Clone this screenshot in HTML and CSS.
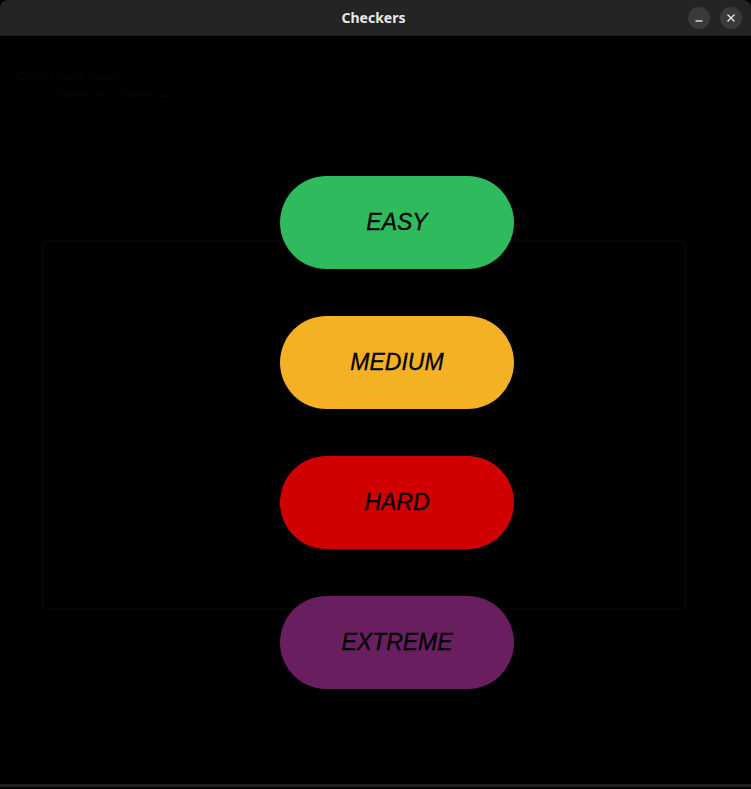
FILE: index.html
```html
<!DOCTYPE html>
<html lang="en">
<head>
<meta charset="utf-8">
<title>Checkers</title>
<link rel="stylesheet" href="styles.css">
</head>
<body>
<div class="window">
  <header class="titlebar">
    <div class="title">Checkers</div>
    <div class="controls">
      <button class="ctrl" aria-label="Minimize">
        <svg width="10" height="10" viewBox="0 0 10 10"><path d="M1.5 8h7" stroke="#e6e6e6" stroke-width="1.4"/></svg>
      </button>
      <button class="ctrl" aria-label="Close">
        <svg width="10" height="10" viewBox="0 0 10 10"><path d="M1.5 1.5l7 7M8.5 1.5l-7 7" stroke="#e6e6e6" stroke-width="1.4"/></svg>
      </button>
    </div>
  </header>
  <main class="content">
    <div class="backdrop">
      <div class="faint-text l1">Current game status</div>
      <div class="faint-text l2">Player one &nbsp;&nbsp; Player two</div>
      <div class="faint-frame"></div>
    </div>
    <div class="menu">
      <button class="pill easy">EASY</button>
      <button class="pill medium">MEDIUM</button>
      <button class="pill hard">HARD</button>
      <button class="pill extreme">EXTREME</button>
    </div>
  </main>
  <div class="bottom-edge"></div>
</div>
</body>
</html>
```

FILE: styles.css
```css
html, body {
  margin: 0;
  padding: 0;
  background: #000;
}

.window {
  width: 751px;
  height: 789px;
  display: flex;
  flex-direction: column;
  background: #000;
  font-family: "Liberation Sans", Arial, sans-serif;
}

.titlebar {
  height: 36px;
  flex: 0 0 36px;
  background: #242424;
  border-bottom: 1px solid #1b1b1b;
  box-sizing: border-box;
  display: flex;
  align-items: center;
  justify-content: center;
  position: relative;
  border-radius: 8px 8px 0 0;
}

.title {
  color: #e8e8e8;
  font-family: "Noto Sans", "DejaVu Sans", sans-serif;
  font-weight: 700;
  font-size: 14px;
  margin-left: -4px;
}

.controls {
  position: absolute;
  right: 9px;
  top: 7px;
  display: flex;
  gap: 10px;
}

.ctrl {
  width: 22px;
  height: 22px;
  border-radius: 50%;
  border: none;
  background: #3a3a3a;
  padding: 0;
  display: flex;
  align-items: center;
  justify-content: center;
}

.content {
  flex: 1;
  position: relative;
  background: #000;
}

.backdrop {
  position: absolute;
  inset: 0;
  pointer-events: none;
}

.faint-text {
  position: absolute;
  color: #070707;
  font-size: 11px;
}
.l1 { left: 18px; top: 34px; }
.l2 { left: 56px; top: 52px; }

.faint-frame {
  position: absolute;
  left: 42px;
  top: 204px;
  width: 640px;
  height: 366px;
  border: 2px solid #050505;
  border-radius: 4px;
}

.menu {
  position: relative;
  display: flex;
  flex-direction: column;
  gap: 47px;
  padding-top: 140px;
  padding-left: 280px;
}

.pill {
  width: 234px;
  height: 93px;
  border: none;
  border-radius: 47px;
  font-family: "Liberation Sans", Arial, sans-serif;
  font-style: italic;
  font-size: 23px;
  color: #000;
  -webkit-text-stroke: 0.3px #000;
  display: flex;
  align-items: center;
  justify-content: center;
  padding: 0;
}

.easy { background: #2fbb5d; }
.medium { background: #f5b124; }
.hard { background: #d10000; }
.extreme { background: #691f5f; }

.bottom-edge {
  height: 5px;
  flex: 0 0 5px;
  border-top: 3px solid #1f1f1f;
  box-sizing: border-box;
  background: #000;
}
```
